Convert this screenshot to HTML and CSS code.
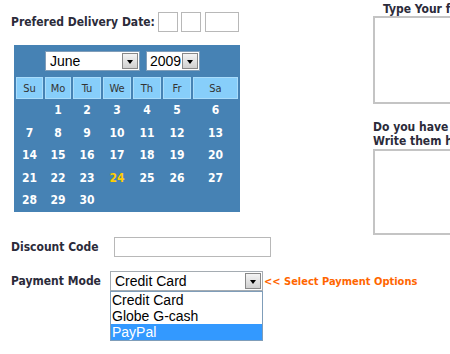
FILE: index.html
```html
<!DOCTYPE html>
<html>
    <head>
        <title>Order Form</title>
        <link rel="stylesheet" href="styles.css">
    </head>
    <body>
        <div class="page">
            <div class="top">
                <div class="left">
                    <div class="date-row">
                        <span class="label">Prefered Delivery Date:</span>
                        <span class="box box-small"></span>
                        <span class="box box-small"></span>
                        <span class="box box-wide"></span>
                    </div>
                    <div class="calendar">
                        <div class="cal-selects">
                            <div class="select month-select"><span>June</span><i class="arrow"></i></div>
                            <div class="select year-select"><span>2009</span><i class="arrow"></i></div>
                        </div>
                        <div class="cal-grid">
                            <div class="day-head">Su</div>
                            <div class="day-head">Mo</div>
                            <div class="day-head">Tu</div>
                            <div class="day-head">We</div>
                            <div class="day-head">Th</div>
                            <div class="day-head">Fr</div>
                            <div class="day-head">Sa</div>
                        </div>
                        <div class="cal-grid cal-days">
                            <div></div><div>1</div><div>2</div><div>3</div><div>4</div><div>5</div><div>6</div>
                            <div>7</div><div>8</div><div>9</div><div>10</div><div>11</div><div>12</div><div>13</div>
                            <div>14</div><div>15</div><div>16</div><div>17</div><div>18</div><div>19</div><div>20</div>
                            <div>21</div><div>22</div><div>23</div><div class="today">24</div><div>25</div><div>26</div><div>27</div>
                            <div>28</div><div>29</div><div>30</div>
                        </div>
                    </div>
                </div>
                <div class="right">
                    <div class="heading heading-first">Type Your feedback here</div>
                    <div class="textarea area-first"></div>
                    <div class="heading heading-second">Do you have any special requests?<br>Write them here</div>
                    <div class="textarea area-second"></div>
                </div>
            </div>
            <div class="form-row discount-row">
                <span class="label row-label">Discount Code</span>
                <span class="box discount-input"></span>
            </div>
            <div class="form-row payment-row">
                <span class="label row-label">Payment Mode</span>
                <div class="payment-wrap">
                    <div class="select payment-select"><span>Credit Card</span><i class="arrow"></i></div>
                    <div class="dropdown">
                        <div class="option">Credit Card</div>
                        <div class="option">Globe G-cash</div>
                        <div class="option selected">PayPal</div>
                    </div>
                </div>
                <span class="hint">&lt;&lt; Select Payment Options</span>
            </div>
        </div>
    </body>
</html>
```

FILE: styles.css
```css
html {
    overflow: hidden;
}
body {
    margin: 0;
    padding: 0;
    background-color: white;
}
.page {
    width: 450px;
    height: 354px;
    font-family: "DejaVu Sans Condensed", "DejaVu Sans", sans-serif;
    color: #2b2b3a;
}
.top {
    display: flex;
    height: 233px;
}
.left {
    width: 373px;
    flex-shrink: 0;
}
.label {
    font-weight: bold;
    font-size: 12px;
}
.date-row {
    display: flex;
    align-items: center;
    padding: 12px 0 0 11px;
    height: 20px;
}
.date-row .label {
    margin-right: 3px;
}
.box {
    display: inline-block;
    height: 18px;
    border: 1px solid #b8b8b8;
    background: white;
    box-sizing: content-box;
}
.box-small {
    width: 18px;
    margin-right: 3px;
}
.box-wide {
    width: 32px;
    margin-left: 1px;
}
.calendar {
    margin: 13px 0 0 14px;
    width: 226px;
    height: 167px;
    background-color: #4682b4;
    box-sizing: border-box;
    padding: 6px 2px 0 2px;
}
.cal-selects {
    display: flex;
    padding-left: 29px;
    gap: 6px;
}
.select {
    display: flex;
    align-items: center;
    justify-content: space-between;
    height: 20px;
    box-sizing: border-box;
    border: 1px solid #7f9db9;
    background: white;
    font-family: "Liberation Sans", Arial, sans-serif;
    font-size: 14px;
    color: black;
    padding: 0 1px 0 4px;
}
.month-select {
    width: 95px;
}
.year-select {
    width: 54px;
    padding-left: 3px;
}
.arrow {
    width: 16px;
    height: 16px;
    box-sizing: border-box;
    border: 1px solid #888;
    background: linear-gradient(#f4f4f4, #d0d0d0);
    position: relative;
    flex-shrink: 0;
}
.arrow::after {
    content: "";
    position: absolute;
    left: 4px;
    top: 6px;
    border-left: 3.5px solid transparent;
    border-right: 3.5px solid transparent;
    border-top: 4px solid black;
}
.cal-grid {
    display: grid;
    grid-template-columns: 27px 26px 28px 28px 28px 28px 1fr;
    column-gap: 2px;
}
.cal-selects + .cal-grid {
    margin-top: 6px;
}
.day-head {
    height: 22px;
    box-sizing: border-box;
    background-color: #87cefa;
    border: 1px solid #a9dcfb;
    font-size: 11px;
    color: #333;
    display: flex;
    align-items: center;
    justify-content: center;
}
.cal-days {
    grid-auto-rows: 22.5px;
    color: white;
    font-weight: bold;
    font-size: 12px;
}
.cal-days div {
    display: flex;
    align-items: center;
    justify-content: center;
}
.cal-days .today {
    color: #ffcc00;
}
.right {
    flex: 1;
}
.heading {
    font-weight: bold;
    font-size: 12px;
    line-height: 14px;
    white-space: nowrap;
}
.heading-first {
    padding: 2px 0 0 10px;
}
.heading-second {
    margin-top: 16px;
}
.textarea {
    width: 160px;
    box-sizing: border-box;
    border: 2px solid #c4c4c4;
    background: white;
}
.area-first {
    height: 88px;
}
.area-second {
    height: 86px;
    margin-top: 1px;
}
.form-row {
    display: flex;
    align-items: center;
    padding-left: 11px;
}
.discount-row {
    margin-top: 4px;
}
.discount-row .row-label {
    width: 103px;
}
.payment-row .row-label {
    width: 99px;
}
.discount-input {
    width: 155px;
}
.payment-row {
    margin-top: 14px;
}
.payment-wrap {
    position: relative;
}
.payment-select {
    width: 153px;
    border-color: #a5acb2;
}
.dropdown {
    position: absolute;
    left: 0;
    top: 20px;
    width: 153px;
    box-sizing: border-box;
    border: 1px solid #7f9db9;
    background: white;
    font-family: "Liberation Sans", Arial, sans-serif;
    font-size: 14px;
    color: black;
}
.option {
    height: 16px;
    line-height: 16px;
    padding-left: 1px;
}
.option.selected {
    background-color: #3399ff;
    color: white;
}
.hint {
    font-weight: bold;
    font-size: 11px;
    color: #ff6600;
    margin-left: 1px;
}
```
